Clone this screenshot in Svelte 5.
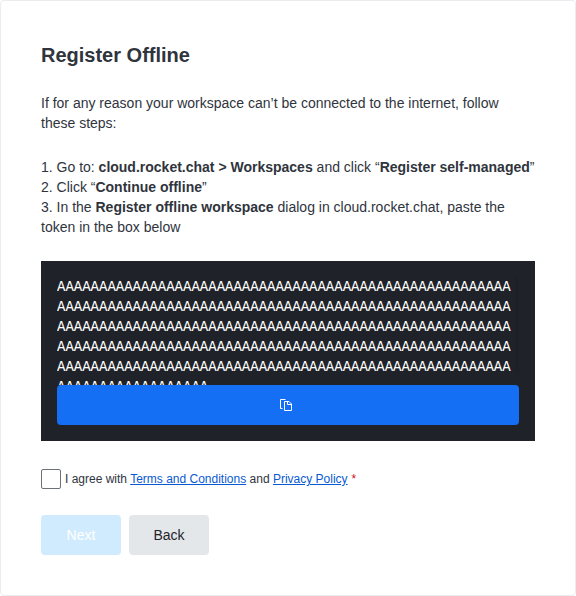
<script>
  const token = 'A'.repeat(54 * 5 + 18);
</script>

<main class="card">
  <h1>Register Offline</h1>
  <p class="intro">If for any reason your workspace can’t be connected to the internet, follow these steps:</p>
  <div class="steps">
    <div>1. Go to: <strong>cloud.rocket.chat &gt; Workspaces</strong> and click “<strong>Register self-managed</strong>”</div>
    <div>2. Click “<strong>Continue offline</strong>”</div>
    <div>3. In the <strong>Register offline workspace</strong> dialog in cloud.rocket.chat, paste the token in the box below</div>
  </div>
  <div class="box">
    <div class="scroll">
      <div class="token">{token}</div>
      <div class="thumb"></div>
    </div>
    <button class="copy" aria-label="Copy">
      <svg width="16" height="16" viewBox="0 0 16 16" fill="none" stroke="#fff" stroke-width="1">
        <path d="M7.5 2.5h-5v9h2" />
        <path d="M6.5 4.5h4.5l2.5 2.5v6.5h-7z" />
        <path d="M9.5 4.5v3h4" />
      </svg>
    </button>
  </div>
  <div class="agree">
    <span class="check" role="checkbox" aria-checked="false" tabindex="0" aria-label="Agree"></span>
    <span>I agree with <a href="#terms">Terms and Conditions</a> and <a href="#privacy">Privacy Policy</a><i>*</i></span>
  </div>
  <div class="actions">
    <button class="next">Next</button>
    <button class="back">Back</button>
  </div>
</main>

<style>
  :global(body) { background: #fff; }
  .card {
    box-sizing: border-box;
    width: 576px;
    height: 596px;
    padding: 40px;
    border: 1px solid #ebecef;
    border-radius: 4px;
    background: #fff;
    color: #2f343d;
    font: 14px/20px "Liberation Sans", Arial, sans-serif;
  }
  h1 { margin: 0; font-size: 20px; line-height: 28px; font-weight: 700; }
  p { margin: 24px 0; }
  .box {
    box-sizing: border-box;
    height: 180px;
    margin-top: 24px;
    padding: 16px;
    background: #1f2329;
    display: flex;
    flex-direction: column;
  }
  .scroll { display: flex; height: 108px; overflow: hidden; }
  .token {
    flex: 1;
    min-width: 0;
    color: #fff;
    font: 14px/20px "Liberation Mono", monospace;
    word-break: break-all;
  }
  .thumb { width: 4px; height: 97px; background: #1d2027; }
  button {
    display: flex;
    align-items: center;
    justify-content: center;
    height: 40px;
    padding: 0;
    border: 0;
    border-radius: 4px;
    font: 14px/20px "Liberation Sans", Arial, sans-serif;
  }
  .copy { box-sizing: border-box; width: 462px; flex: none; padding-right: 4px; background: #156ff5; }
  .agree { display: flex; align-items: center; gap: 4px; margin-top: 28px; font-size: 12px; }
  .check { box-sizing: border-box; width: 20px; height: 20px; border: 1px solid #6c727a; border-radius: 2px; }
  a { color: #095ad2; text-decoration: underline; }
  i { margin-left: 4px; color: #d40c26; font-style: normal; }
  .actions { display: flex; gap: 8px; margin-top: 26px; }
  .actions button { width: 80px; }
  .next { background: #d1ebfe; color: #fff; }
  .back { background: #e4e7ea; color: #1f2329; }
</style>
